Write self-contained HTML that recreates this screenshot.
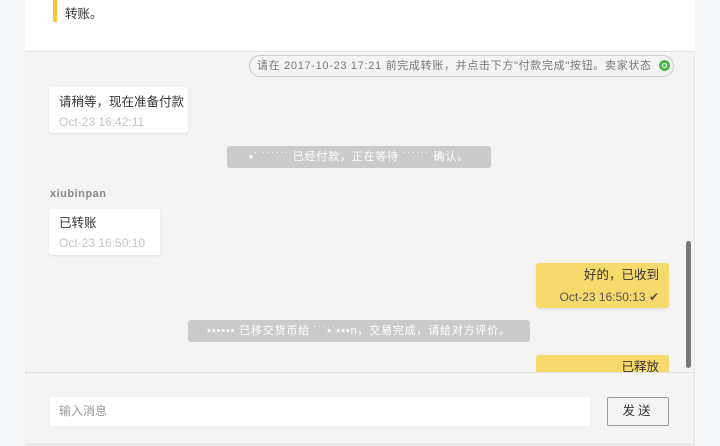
<!DOCTYPE html>
<html><head><meta charset="utf-8"><style>
*{margin:0;padding:0;box-sizing:border-box}
body{width:720px;height:446px;background:#f7f8fa;font-family:"Liberation Sans","Noto Sans CJK SC",sans-serif;position:relative;overflow:hidden}
.a{position:absolute}
.panel{left:25px;top:0;width:670px;height:445px;background:#f4f4f4;border-right:1px solid #e6e6e6;border-left:1px solid #eee;border-bottom:1px solid #ddd}
.top{left:25px;top:0;width:670px;height:52px;background:#fff;border-bottom:1px solid #e2e2e2}
.bub{background:#fff;border-radius:3px;box-shadow:0 1px 2px rgba(0,0,0,.08);font-size:12.5px;color:#333}
.t{font-size:12px;color:#c4c4c4}
.y{background:#f8d96c;border-radius:3px;text-align:right}
.sys{background:#cbcbcb;color:#fff;font-size:11px;border-radius:3px;text-align:center;line-height:22px;letter-spacing:.8px}
</style></head><body>
<div class="a panel"></div>
<div class="a top"></div>
<div class="a" style="left:53px;top:0;width:4px;height:22px;background:#fbc43b"></div>
<div class="a" style="left:65px;top:3px;font-size:12.5px;color:#333">转账。</div>
<div class="a" style="left:249px;top:55px;width:425px;height:22px;border:1px solid #ccc;border-radius:11px;font-size:11px;color:#777;line-height:20px;padding-left:7px;letter-spacing:.68px;white-space:nowrap">请在 2017-10-23 17:21 前完成转账，并点击下方"付款完成"按钮。卖家状态</div>
<div class="a" style="left:659px;top:60px;width:11px;height:11px;border-radius:50%;background:#4cb548"></div>
<div class="a" style="left:662px;top:63px;width:5px;height:5px;border-radius:50%;border:1px solid #fff"></div>
<div class="a bub" style="left:49px;top:87px;width:139px;height:46px"><div class="a" style="left:10px;top:4px">请稍等，现在准备付款</div><div class="a t" style="left:10px;top:28px">Oct-23 16:42:11</div></div>
<div class="a sys" style="left:227px;top:146px;width:264px;height:22px">▪˙ ˙˙˙˙˙˙ 已经付款，正在等待 ˙˙˙˙˙˙ 确认。</div>
<div class="a" style="left:50px;top:188px;font-size:11px;color:#888;font-weight:bold;letter-spacing:.5px">xiubinpan</div>
<div class="a bub" style="left:49px;top:209px;width:111px;height:46px"><div class="a" style="left:10px;top:3px">已转账</div><div class="a t" style="left:10px;top:27px">Oct-23 16:50:10</div></div>
<div class="a bub y" style="left:536px;top:263px;width:133px;height:45px"><div class="a" style="right:10px;top:1px">好的，已收到</div><div class="a" style="right:10px;top:27px;font-size:12px;color:#555">Oct-23 16:50:13 ✔</div></div>
<div class="a sys" style="left:188px;top:320px;width:342px;height:22px">▪▪▪▪▪▪ 已移交货币给 ˙˙˙▪˙▪▪▪n，交易完成，请给对方评价。</div>
<div class="a" style="left:536px;top:355px;width:133px;height:17px;overflow:hidden"><div class="bub y" style="height:40px;position:relative"><div class="a" style="right:10px;top:1px">已释放</div></div></div>
<div class="a" style="left:686px;top:241px;width:5px;height:127px;background:#777;border-radius:3px"></div>
<div class="a" style="left:25px;top:372px;width:670px;height:1px;background:#e2e2e2"></div>
<div class="a" style="left:50px;top:397px;width:540px;height:29px;background:#fff;font-size:12px;color:#999;line-height:28px;padding-left:9px">输入消息</div>
<div class="a" style="left:607px;top:397px;width:62px;height:29px;border:1px solid #999;border-radius:2px;font-size:12.5px;color:#333;line-height:27px;text-align:center;letter-spacing:3px">发送</div>
</body></html>
